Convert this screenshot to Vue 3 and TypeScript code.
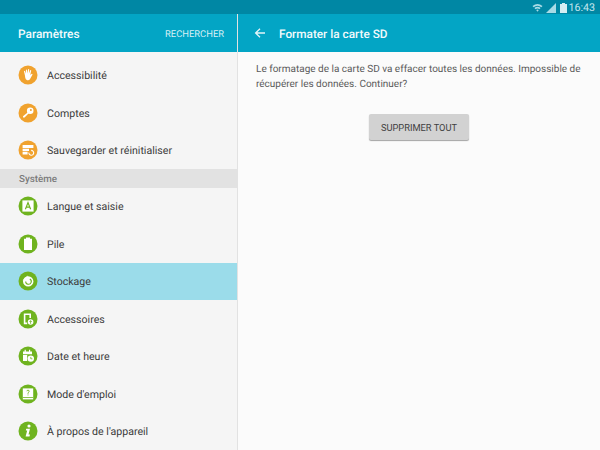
<script setup lang="ts">
interface Row {
  label: string
  icon: string
  color: string
  active?: boolean
}

const orange = '#f0a22e'
const green = '#6fb31f'

const topRows: Row[] = [
  { label: 'Accessibilité', icon: 'hand', color: orange },
  { label: 'Comptes', icon: 'key', color: orange },
  { label: 'Sauvegarder et réinitialiser', icon: 'backup', color: orange },
]

const systemRows: Row[] = [
  { label: 'Langue et saisie', icon: 'lang', color: green },
  { label: 'Pile', icon: 'battery', color: green },
  { label: 'Stockage', icon: 'storage', color: green, active: true },
  { label: 'Accessoires', icon: 'accessory', color: green },
  { label: 'Date et heure', icon: 'date', color: green },
  { label: "Mode d'emploi", icon: 'manual', color: green },
  { label: "À propos de l'appareil", icon: 'info', color: green },
]

const sections = [
  { title: '', rows: topRows },
  { title: 'Système', rows: systemRows },
]
</script>

<template>
  <div class="tablet">
    <div class="status">
      <svg class="st-wifi" width="11" height="10" viewBox="0 0 11 10">
        <path d="M0.5 3 Q5.5 -1 10.5 3 L9.4 4.3 Q5.5 1.1 1.6 4.3 Z" fill="#a9dbe6" />
        <path d="M2.4 4.9 Q5.5 2.4 8.6 4.9 L7.5 6.2 Q5.5 4.7 3.5 6.2 Z" fill="#a9dbe6" />
        <path d="M4.2 6.9 Q5.5 6 6.8 6.9 L5.5 8.7 Z" fill="#a9dbe6" />
      </svg>
      <svg class="st-signal" width="10" height="10" viewBox="0 0 10 10">
        <path d="M0 10 L10 0 V10 Z" fill="#a9dbe6" />
      </svg>
      <svg class="st-batt" width="7" height="10" viewBox="0 0 7 10">
        <path d="M2 0 H5 V1 H7 V10 H0 V1 H2 Z" fill="#d5eef3" />
      </svg>
      <span class="clock">16:43</span>
    </div>

    <div class="panes">
      <aside class="left">
        <header class="left-head">
          <span class="left-title">Paramètres</span>
          <span class="search">RECHERCHER</span>
        </header>
        <div class="list">
          <template v-for="sec in sections" :key="sec.title">
            <div v-if="sec.title" class="sec-title">{{ sec.title }}</div>
            <div v-for="row in sec.rows" :key="row.label" class="row" :class="{ 'row--active': row.active }">
              <svg class="ico" width="20" height="20" viewBox="0 0 20 20">
                <circle cx="10" cy="10" r="9.5" :fill="row.color" />
                <g v-if="row.icon === 'hand'" fill="#fff">
                  <path d="M6.9 10.2 L6 6.4 Q6.2 5.5 7 6 L8 8.8 L7.9 4.9 Q8.4 4 9 4.8 L9.4 8.4 L10.1 4.2 Q10.7 3.6 11.2 4.4 L10.9 8.5 L12.2 5.2 Q12.9 4.8 13.2 5.6 L12.3 10 L13.8 8.8 Q14.8 8.8 14.4 9.8 L11.9 14.2 Q11 15.6 9.2 15.2 Q7.4 14.8 7.2 12.6 Z" />
                </g>
                <g v-else-if="row.icon === 'key'">
                  <circle cx="12.2" cy="7.8" r="3.3" fill="#fff" />
                  <circle cx="12.9" cy="7" r="1" :fill="row.color" />
                  <path d="M10.2 9 L11 9.9 L6.6 14.6 L5 14.6 L5 13.2 Z" fill="#fff" />
                </g>
                <g v-else-if="row.icon === 'backup'">
                  <path d="M4.6 5 H15.4 V8 H4.6 Z M4.6 8.8 H11 V11 H4.6 Z M4.6 11.8 H9.6 V14.6 H4.6 Z" fill="#fff" />
                  <path d="M13.2 10.4 A2.4 2.4 0 1 1 10.9 12.6" fill="none" stroke="#fff" stroke-width="1.1" />
                </g>
                <g v-else-if="row.icon === 'lang'">
                  <rect x="4.4" y="4.4" width="11.2" height="11.2" fill="#fff" />
                  <path d="M7.4 13.2 L10 6.6 L12.6 13.2 M8.3 11.1 H11.7" fill="none" :stroke="row.color" stroke-width="1.2" />
                </g>
                <g v-else-if="row.icon === 'battery'">
                  <path d="M8 3.6 H12 V4.8 H14 V16 H6 V4.8 H8 Z" fill="#fff" />
                </g>
                <g v-else-if="row.icon === 'storage'">
                  <circle cx="10.2" cy="10.4" r="5.2" fill="#fff" />
                  <path d="M4.6 9.4 L9.6 4.6 V9.4 Z" fill="#fff" />
                  <path d="M11.8 8 A2.8 2.8 0 1 1 7.7 10.4" fill="none" :stroke="row.color" stroke-width="1.1" />
                </g>
                <g v-else-if="row.icon === 'accessory'">
                  <path d="M5.8 4.4 H13 V9 H11.4 V6 H7.4 V13.6 H9.2 V15.2 H5.8 Z" fill="#fff" />
                  <circle cx="12.6" cy="13" r="2.8" fill="#fff" />
                  <path d="M12.6 14.8 V11.8 M11.5 12.9 L12.6 11.6 L13.7 12.9" fill="none" :stroke="row.color" stroke-width="0.8" />
                </g>
                <g v-else-if="row.icon === 'date'">
                  <path d="M5 5.4 H6.6 V3.8 H7.8 V5.4 H11 V3.8 H12.2 V5.4 H14 V8.2 H5 Z M5 9 H9.2 V15 H5 Z" fill="#fff" />
                  <circle cx="12.8" cy="12.6" r="3.2" fill="#fff" />
                  <path d="M12.8 10.9 V12.8 H14.4" fill="none" :stroke="row.color" stroke-width="0.8" />
                </g>
                <g v-else-if="row.icon === 'manual'">
                  <rect x="4.8" y="4.4" width="10.4" height="11" fill="#fff" />
                  <rect x="4.8" y="13" width="10.4" height="0.8" :fill="row.color" />
                  <path d="M8.8 7.2 Q9 6.2 10 6.2 Q11.2 6.2 11.2 7.3 Q11.2 8 10.4 8.4 L10 9 V9.8 M10 10.5 V11.4" fill="none" :stroke="row.color" stroke-width="0.9" />
                </g>
                <g v-else-if="row.icon === 'info'" fill="#fff">
                  <circle cx="11" cy="5" r="1.6" />
                  <path d="M8.2 7.8 H12 L10.5 13.6 H12 L11.5 15.4 H7.6 L9.2 9.4 H7.8 Z" />
                </g>
              </svg>
              <span class="row-label">{{ row.label }}</span>
            </div>
          </template>
        </div>
      </aside>

      <main class="right">
        <header class="right-head">
          <svg class="back" width="12" height="12" viewBox="0 0 12 12">
            <path d="M11 6 H2 M6 1.8 L1.6 6 L6 10.2" fill="none" stroke="#e4f5f9" stroke-width="1.3" />
          </svg>
          <span class="right-title">Formater la carte SD</span>
        </header>
        <div class="body">
          <p class="msg">Le formatage de la carte SD va effacer toutes les données. Impossible de récupérer les données. Continuer?</p>
          <div class="actions">
            <button class="btn" type="button">SUPPRIMER TOUT</button>
          </div>
        </div>
      </main>
    </div>
  </div>
</template>

<style>
html,
body {
  margin: 0;
  overflow: hidden;
}
</style>

<style scoped>
.tablet {
  width: 600px;
  height: 450px;
  display: flex;
  flex-direction: column;
  overflow: hidden;
  font-family: Roboto, "Liberation Sans", sans-serif;
  text-rendering: geometricPrecision;
  background: #fbfbfb;
}

.status {
  height: 14px;
  flex-shrink: 0;
  background: #0087a4;
  display: flex;
  align-items: center;
  justify-content: flex-end;
  padding: 1px 5px 0 0;
  box-sizing: border-box;
  color: #c4e6ee;
}

.st-wifi {
  margin-right: 3px;
}

.st-signal {
  margin-right: 4px;
}

.st-batt {
  margin-right: 1px;
}

.clock {
  font-size: 10.7px;
  line-height: 13px;
}

.panes {
  flex: 1;
  display: flex;
  min-height: 0;
}

.left {
  width: 237px;
  flex-shrink: 0;
  background: #f5f5f5;
  border-right: 1px solid #e2e2e2;
  display: flex;
  flex-direction: column;
}

.left-head {
  height: 38px;
  flex-shrink: 0;
  background: #03a5c5;
  display: flex;
  align-items: center;
  justify-content: space-between;
  padding: 2px 13px 0 18px;
  box-sizing: border-box;
  color: #f2fafc;
}

.left-title {
  font-size: 11.9px;
  font-weight: 500;
}

.search {
  font-size: 9.4px;
  color: #d9f0f5;
}

.list {
  padding-top: 4.5px;
}

.sec-title {
  height: 18.5px;
  line-height: 21px;
  padding-left: 19px;
  background: #e2e2e2;
  color: #7b7b7b;
  font-size: 9.8px;
  font-weight: 500;
}

.row {
  height: 37.5px;
  display: flex;
  align-items: center;
  padding-left: 18px;
  color: #3b3b3b;
}

.row--active {
  background: #9bdcea;
}

.ico {
  flex-shrink: 0;
  margin-right: 9px;
}

.row-label {
  padding-top: 0.6px;
  font-size: 10.6px;
}

.right {
  flex: 1;
  min-width: 0;
  display: flex;
  flex-direction: column;
}

.right-head {
  height: 38px;
  flex-shrink: 0;
  background: #03a5c5;
  display: flex;
  align-items: center;
  padding-left: 16px;
}

.back {
  margin-right: 13px;
}

.right-title {
  padding-top: 2px;
  color: #f2fafc;
  font-size: 11.8px;
  font-weight: 500;
}

.body {
  padding: 10px 18px 0;
}

.msg {
  margin: 0;
  font-size: 10px;
  line-height: 15px;
  color: #5a5a5a;
}

.actions {
  display: flex;
  justify-content: center;
  margin-top: 22px;
}

.btn {
  width: 100px;
  height: 26px;
  padding: 0;
  border: none;
  border-radius: 2px;
  background: #d2d2d2;
  box-shadow: 0 1px 1px rgba(0, 0, 0, 0.35);
  color: #3f3f3f;
  font-family: inherit;
  font-size: 9.3px;
}
</style>
